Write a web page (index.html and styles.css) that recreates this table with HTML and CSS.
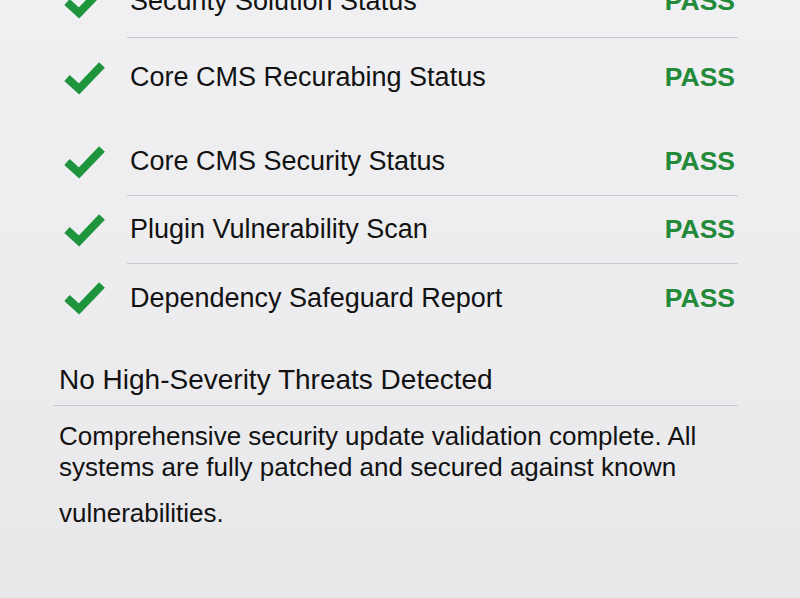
FILE: index.html
```html
<!DOCTYPE html>
<html lang="en">
<head>
<meta charset="utf-8">
<title>Security Update Validation</title>
<link rel="stylesheet" href="styles.css">
</head>
<body>
<main class="report">
  <ul class="checks">
    <li class="check check--first">
      <span class="check-icon"><svg viewBox="0 0 42 34" width="42" height="34"><polyline points="3,17 15,28 38,4"/></svg></span>
      <div class="check-body"><span class="check-name">Security Solution Status</span><span class="check-result">PASS</span></div>
    </li>
    <li class="check check--tall check--open">
      <span class="check-icon"><svg viewBox="0 0 42 34" width="42" height="34"><polyline points="3,17 15,28 38,4"/></svg></span>
      <div class="check-body"><span class="check-name">Core CMS Recurabing Status</span><span class="check-result">PASS</span></div>
    </li>
    <li class="check check--spaced">
      <span class="check-icon"><svg viewBox="0 0 42 34" width="42" height="34"><polyline points="3,17 15,28 38,4"/></svg></span>
      <div class="check-body"><span class="check-name">Core CMS Security Status</span><span class="check-result">PASS</span></div>
    </li>
    <li class="check">
      <span class="check-icon"><svg viewBox="0 0 42 34" width="42" height="34"><polyline points="3,17 15,28 38,4"/></svg></span>
      <div class="check-body"><span class="check-name">Plugin Vulnerability Scan</span><span class="check-result">PASS</span></div>
    </li>
    <li class="check check--open">
      <span class="check-icon"><svg viewBox="0 0 42 34" width="42" height="34"><polyline points="3,17 15,28 38,4"/></svg></span>
      <div class="check-body"><span class="check-name">Dependency Safeguard Report</span><span class="check-result">PASS</span></div>
    </li>
  </ul>
  <section class="summary">
    <h2 class="summary-title">No High-Severity Threats Detected</h2>
    <p class="summary-text">Comprehensive security update validation complete. All<br>systems are fully patched and secured against known<span class="summary-last">vulnerabilities.</span></p>
  </section>
</main>
</body>
</html>
```
FILE: styles.css
```css
html, body {
  margin: 0;
  padding: 0;
  height: 100%;
}
body {
  background: linear-gradient(180deg, #f0f0f2 0%, #ececef 60%, #e8e8eb 100%);
  font-family: "Liberation Sans", Arial, sans-serif;
  color: #151515;
  overflow: hidden;
}
.report {
  display: flex;
  flex-direction: column;
  padding: 0 62px 0 53px;
  margin-top: -34px;
}
.checks {
  list-style: none;
  margin: 0;
  padding: 0 0 0 7px;
  display: flex;
  flex-direction: column;
}
.check {
  display: flex;
  height: 68px;
}
.check--first {
  height: 72px;
}
.check--tall {
  height: 79px;
}
.check--spaced {
  margin-top: 11px;
}
.check-icon {
  width: 67px;
  flex: none;
  display: flex;
  align-items: center;
  padding-left: 4px;
  box-sizing: border-box;
}
.check-icon svg {
  display: block;
}
.check-icon polyline {
  fill: none;
  stroke: #1e953d;
  stroke-width: 8;
  stroke-linejoin: miter;
  stroke-linecap: butt;
}
.check-body {
  flex: 1;
  display: flex;
  align-items: center;
  justify-content: space-between;
  border-bottom: 1px solid #c9c9cd;
  padding: 0 3px 0 3px;
}
.check--open .check-body {
  border-bottom: none;
}
.check-name {
  font-size: 27px;
  color: #121212;
}
.check-result {
  font-size: 26.5px;
  font-weight: bold;
  color: #238a39;
}
.summary {
  margin-top: 32px;
}
.summary-title {
  margin: 0;
  font-size: 28px;
  font-weight: normal;
  color: #121212;
  padding: 0 0 9px 6px;
  border-bottom: 1px solid #c9c9cd;
}
.summary-text {
  margin: 15px 0 0;
  padding-left: 6px;
  font-size: 26px;
  line-height: 31px;
  color: #121212;
}
.summary-last {
  display: block;
  margin-top: 15px;
}
```
